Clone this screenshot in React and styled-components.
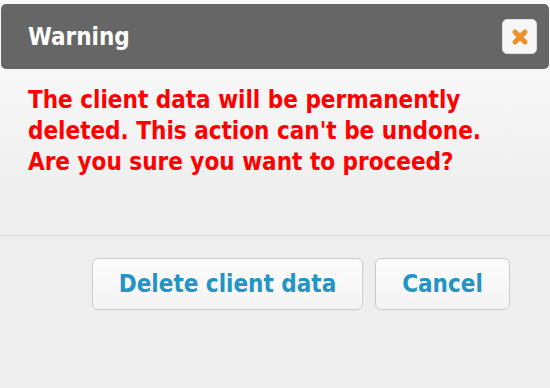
import styled, { createGlobalStyle } from "styled-components";

const GlobalStyle = createGlobalStyle`
  html, body {
    margin: 0;
    padding: 0;
    background: #eeeeee;
    font-family: "DejaVu Sans Condensed", "DejaVu Sans", sans-serif;
  }
`;

const Dialog = styled.div`
  width: 550px;
  height: 388px;
  box-sizing: border-box;
  padding: 4px 1px 0;
  display: flex;
  flex-direction: column;
  background: linear-gradient(#f9f9f9 60px, #eeeeee 200px);
`;

const TitleBar = styled.div`
  height: 65px;
  display: flex;
  align-items: center;
  justify-content: space-between;
  padding: 0 12px 0 27px;
  background: #666666;
  border-radius: 5px;
`;

const Title = styled.span`
  color: #ffffff;
  font-size: 24px;
  font-weight: bold;
`;

const CloseButton = styled.button`
  width: 35px;
  height: 35px;
  padding: 0;
  display: flex;
  align-items: center;
  justify-content: center;
  border: 1px solid #dddddd;
  border-radius: 5px;
  background: #f7f7f7;
`;

const Message = styled.p`
  margin: 0 -1px;
  padding: 16px 27px 0 28px;
  height: 150px;
  color: #ff0000;
  font-size: 24px;
  font-weight: bold;
  line-height: 31px;
  border-bottom: 1px solid #dcdcdc;
`;

const Actions = styled.div`
  display: flex;
  justify-content: flex-end;
  gap: 12px;
  padding: 22px 39px 0 0;
`;

const Button = styled.button`
  box-sizing: border-box;
  width: ${(p) => p.$width}px;
  height: 52px;
  padding: 0;
  border: 1px solid #cccccc;
  border-radius: 6px;
  background: linear-gradient(#fcfcfc, #f4f4f4);
  color: #2394c6;
  font-family: inherit;
  font-size: 24px;
  font-weight: bold;
`;

const CloseIcon = () => (
  <svg width="18" height="18" viewBox="0 0 18 18">
    <path
      d="M4 4 L14 14 M14 4 L4 14"
      stroke="#f0902a"
      strokeWidth="5"
      strokeLinecap="round"
    />
  </svg>
);

export default function App() {
  return (
    <>
      <GlobalStyle />
      <Dialog>
        <TitleBar>
          <Title>Warning</Title>
          <CloseButton aria-label="Close">
            <CloseIcon />
          </CloseButton>
        </TitleBar>
        <Message>
          The client data will be permanently deleted. This action can't be
          undone. Are you sure you want to proceed?
        </Message>
        <Actions>
          <Button $width={271}>Delete client data</Button>
          <Button $width={135}>Cancel</Button>
        </Actions>
      </Dialog>
    </>
  );
}
